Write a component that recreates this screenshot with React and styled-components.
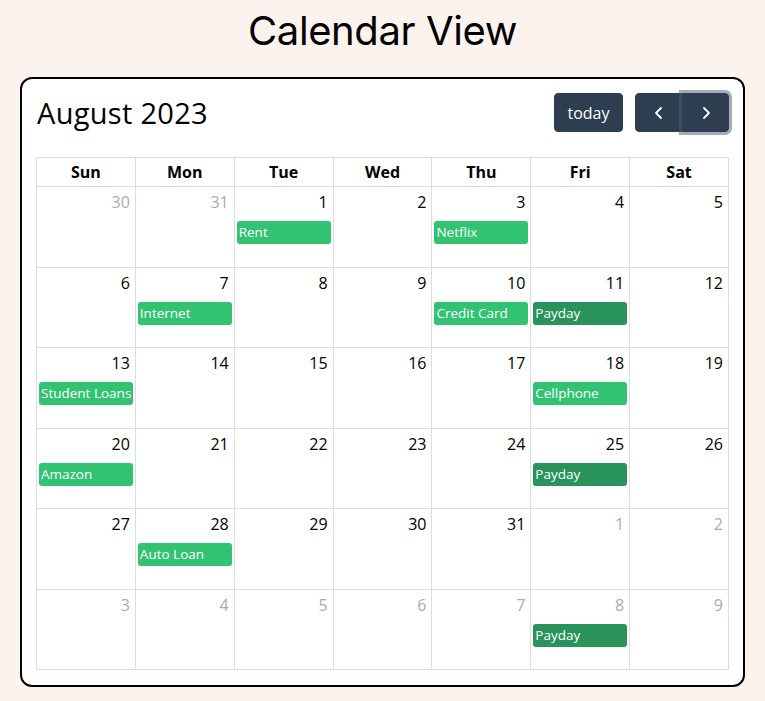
import React from "react";
import styled, { createGlobalStyle } from "styled-components";

const Global = createGlobalStyle`
  html, body { margin: 0; padding: 0; background: #fdf3ee; }
  body { font-family: "Open Sans", "Inter", sans-serif; color: #000; }
`;

const Page = styled.div`
  display: flex;
  flex-direction: column;
  align-items: stretch;
  padding: 0 20px 15px;
`;

const Title = styled.h1`
  margin: 0;
  height: 77px;
  display: flex;
  align-items: center;
  justify-content: center;
  font-family: "Inter", sans-serif;
  font-weight: 400;
  font-size: 40px;
  letter-spacing: -0.4px;
  padding-bottom: 16px;
  box-sizing: border-box;
`;

const Card = styled.div`
  background: #fff;
  border: 2px solid #000;
  border-radius: 12px;
  padding: 14px 14px 15px;
`;

const Toolbar = styled.div`
  display: flex;
  align-items: center;
  justify-content: space-between;
  height: 39px;
  margin-bottom: 25px;
`;

const MonthTitle = styled.h2`
  margin: 0;
  font-family: "Open Sans", sans-serif;
  font-weight: 400;
  font-size: 29px;
  letter-spacing: 0.3px;
  padding-left: 1px;
`;

const Actions = styled.div`
  display: flex;
  gap: 12px;
  padding-right: 0px;
`;

const Btn = styled.button`
  height: 39px;
  min-width: ${(p) => (p.$icon ? "47px" : "auto")};
  padding: 0 ${(p) => (p.$icon ? "0" : "12.5px")};
  background: #2c3e50;
  border: 1px solid #2c3e50;
  color: #fff;
  font-family: "Open Sans", sans-serif;
  font-size: 16px;
  border-radius: ${(p) => p.$radius || "4px"};
  display: flex;
  align-items: center;
  justify-content: center;
  box-shadow: ${(p) => (p.$focus ? "0 0 0 3px rgba(76, 91, 106, 0.5)" : "none")};
  position: relative;
`;

const Group = styled.div`
  display: flex;
`;

const Grid = styled.div`
  display: grid;
  grid-template-columns: repeat(7, 1fr);
  border-top: 1px solid #ddd;
  border-left: 1px solid #ddd;
`;

const HeadCell = styled.div`
  height: 28px;
  border-right: 1px solid #ddd;
  border-bottom: 1px solid #ddd;
  display: flex;
  align-items: center;
  justify-content: center;
  font-weight: 700;
  font-size: 16px;
`;

const DayCell = styled.div`
  height: 80.5px;
  box-sizing: border-box;
  border-right: 1px solid #ddd;
  border-bottom: 1px solid #ddd;
  display: flex;
  flex-direction: column;
  min-width: 0;
`;

const DayNum = styled.div`
  height: 34px;
  box-sizing: border-box;
  padding: 4px 5px 0 0;
  text-align: right;
  font-size: 16px;
  color: ${(p) => (p.$muted ? "#ababab" : "#000")};
`;

const Event = styled.div`
  margin: 0 2px 0 2px;
  height: 23px;
  border-radius: 3px;
  background: ${(p) => (p.$pay ? "#28935a" : "#31c372")};
  color: #fff;
  font-size: 13.5px;
  line-height: 23px;
  padding-left: 2px;
  white-space: nowrap;
  overflow: hidden;
`;

const Chevron = ({ dir }) => (
  <svg width="16" height="16" viewBox="0 0 16 16" fill="none" stroke="#fff" strokeWidth="1.8" strokeLinecap="round" strokeLinejoin="round">
    {dir === "left" ? <polyline points="10,3 5,8 10,13" /> : <polyline points="6,3 11,8 6,13" />}
  </svg>
);

const days = ["Sun", "Mon", "Tue", "Wed", "Thu", "Fri", "Sat"];

const events = {
  1: [{ t: "Rent" }],
  3: [{ t: "Netflix" }],
  7: [{ t: "Internet" }],
  10: [{ t: "Credit Card" }],
  11: [{ t: "Payday", pay: true }],
  13: [{ t: "Student Loans" }],
  18: [{ t: "Cellphone" }],
  20: [{ t: "Amazon" }],
  25: [{ t: "Payday", pay: true }],
  28: [{ t: "Auto Loan" }],
};

const cells = [];
cells.push({ n: 30, muted: true }, { n: 31, muted: true });
for (let i = 1; i <= 31; i++) cells.push({ n: i, ev: events[i] });
for (let i = 1; i <= 9; i++) cells.push({ n: i, muted: true, ev: i === 8 ? [{ t: "Payday", pay: true }] : null });

export default function App() {
  return (
    <>
      <Global />
      <Page>
        <Title>Calendar View</Title>
        <Card>
          <Toolbar>
            <MonthTitle>August 2023</MonthTitle>
            <Actions>
              <Btn>today</Btn>
              <Group>
                <Btn $icon $radius="4px 0 0 4px"><Chevron dir="left" /></Btn>
                <Btn $icon $focus $radius="0 4px 4px 0"><Chevron dir="right" /></Btn>
              </Group>
            </Actions>
          </Toolbar>
          <Grid>
            {days.map((d) => (
              <HeadCell key={d}>{d}</HeadCell>
            ))}
            {cells.map((c, i) => (
              <DayCell key={i}>
                <DayNum $muted={c.muted}>{c.n}</DayNum>
                {c.ev && c.ev.map((e, j) => <Event key={j} $pay={e.pay}>{e.t}</Event>)}
              </DayCell>
            ))}
          </Grid>
        </Card>
      </Page>
    </>
  );
}
